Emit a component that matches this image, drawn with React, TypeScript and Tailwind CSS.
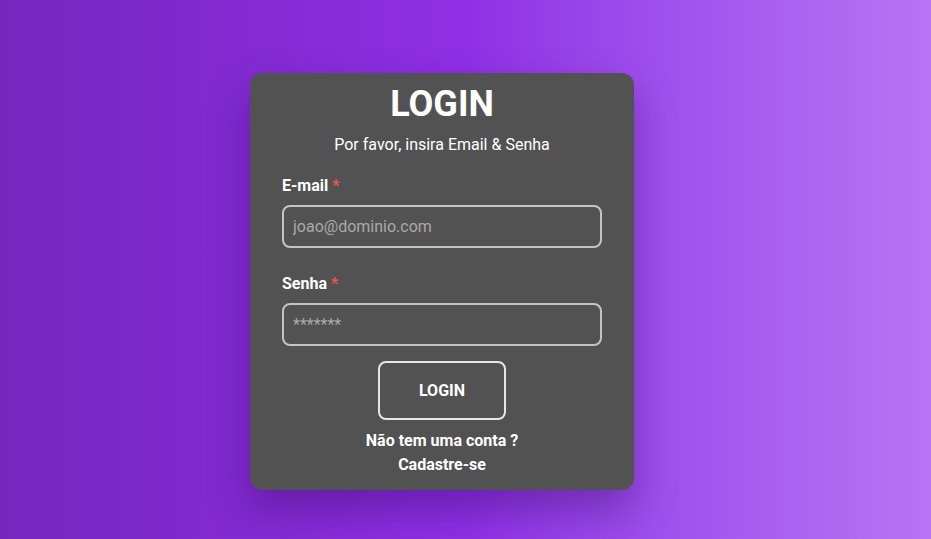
import React from 'react';

const font = { fontFamily: 'Roboto, "Noto Sans", sans-serif' };

function Field({ label, placeholder, type }: { label: string; placeholder: string; type: string }) {
  return (
    <div className="flex flex-col">
      <label className="h-6 text-base font-bold leading-6 text-white">
        {label} <span className="text-[#f05252]">*</span>
      </label>
      <input
        type={type}
        placeholder={placeholder}
        className="mt-[7px] h-[43px] w-full rounded-lg border-2 border-[#c4c4c4] bg-transparent px-[9px] text-base text-white outline-none placeholder:text-[#a9a9a9]"
        style={font}
      />
    </div>
  );
}

export default function App() {
  return (
    <div
      className="flex h-[539px] w-full items-start justify-center bg-gradient-to-r from-[#7625bd] via-[#8f2fe6] to-[#b873f5] pr-[47px]"
      style={font}
    >
      <div className="mt-[73px] flex w-[384px] flex-col rounded-xl bg-[#525252] px-8 pb-[13px] pt-[11px] shadow-[0_20px_40px_rgba(40,0,80,0.35)]">
        <h1 className="text-center text-4xl font-bold leading-10 text-white">LOGIN</h1>
        <p className="mt-[9px] text-center text-base leading-6 text-white">Por favor, insira Email &amp; Senha</p>
        <div className="mt-[17px] flex flex-col gap-6">
          <Field label="E-mail" placeholder="joao@dominio.com" type="email" />
          <Field label="Senha" placeholder="*******" type="password" />
        </div>
        <button
          className="mx-auto mt-[15px] h-[59px] w-32 rounded-lg border-2 border-[#e6e6e6] text-base font-bold text-white"
          style={font}
        >
          LOGIN
        </button>
        <p className="mt-[9px] text-center text-base font-bold leading-6 text-white">Não tem uma conta ?</p>
        <p className="text-center text-base font-bold leading-6 text-white">Cadastre-se</p>
      </div>
    </div>
  );
}
